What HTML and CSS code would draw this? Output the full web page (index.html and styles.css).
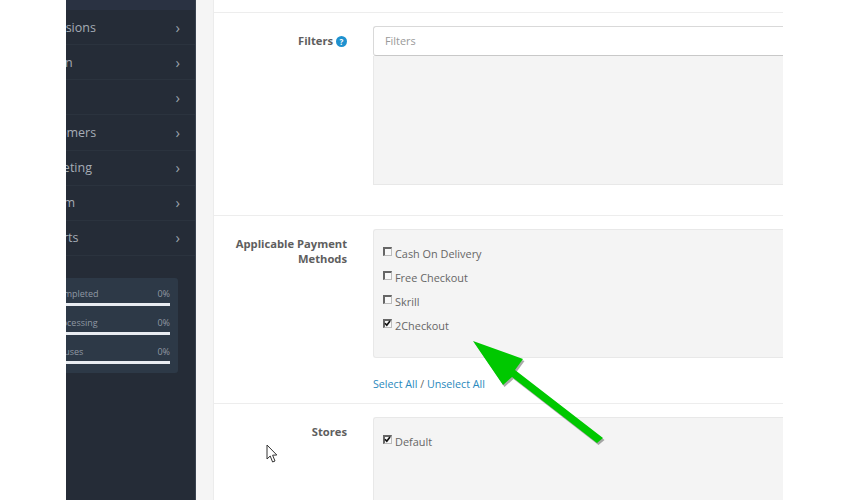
FILE: index.html
```html
<!DOCTYPE html>
<html lang="en">
<head>
<meta charset="utf-8">
<title>Payment Methods</title>
<link rel="stylesheet" href="styles.css">
</head>
<body>
<div class="page">
  <div class="gutter"></div>
  <nav class="sidebar">
    <div class="menu-top"></div>
    <ul class="menu">
      <li class="menu-item"><span class="menu-label">Extensions</span><span class="chev">›</span></li>
      <li class="menu-item"><span class="menu-label">Design</span><span class="chev">›</span></li>
      <li class="menu-item"><span class="menu-label">Sales</span><span class="chev">›</span></li>
      <li class="menu-item"><span class="menu-label">Customers</span><span class="chev">›</span></li>
      <li class="menu-item"><span class="menu-label">Marketing</span><span class="chev">›</span></li>
      <li class="menu-item"><span class="menu-label">System</span><span class="chev">›</span></li>
      <li class="menu-item"><span class="menu-label">Reports</span><span class="chev">›</span></li>
    </ul>
    <div class="stats">
      <div class="stat"><div class="stat-head"><span class="stat-label">Orders Completed</span><span>0%</span></div><div class="stat-bar"></div></div>
      <div class="stat"><div class="stat-head"><span class="stat-label">Orders Processing</span><span>0%</span></div><div class="stat-bar"></div></div>
      <div class="stat"><div class="stat-head"><span class="stat-label">Other Statuses</span><span>0%</span></div><div class="stat-bar"></div></div>
    </div>
  </nav>
  <div class="strip"></div>
  <main class="panel">
    <section class="row row-filters">
      <div class="label">Filters <span class="help">?</span></div>
      <div class="field">
        <div class="input">Filters</div>
        <div class="well well-filters"></div>
      </div>
    </section>
    <section class="row row-payment">
      <div class="label">Applicable Payment Methods</div>
      <div class="field">
        <div class="well well-payment">
          <div class="check-row"><span class="box"></span>Cash On Delivery</div>
          <div class="check-row"><span class="box"></span>Free Checkout</div>
          <div class="check-row"><span class="box"></span>Skrill</div>
          <div class="check-row"><span class="box"><svg viewBox="0 0 9 9" class="tick"><path d="M2 4.2 L3.8 6.2 L7 2" /></svg></span>2Checkout</div>
        </div>
        <div class="links"><a class="link">Select All</a> / <a class="link">Unselect All</a></div>
      </div>
    </section>
    <section class="row row-stores">
      <div class="label">Stores</div>
      <div class="field">
        <div class="well well-stores">
          <div class="check-row"><span class="box"><svg viewBox="0 0 9 9" class="tick"><path d="M2 4.2 L3.8 6.2 L7 2" /></svg></span>Default</div>
        </div>
      </div>
    </section>
  </main>
</div>
<svg class="arrow" viewBox="0 0 850 500" aria-hidden="true">
  <polygon class="arrow-shadow" points="473,341 523,359 515,370 603,438 597,443 512,377 503,385"/>
  <polygon class="arrow-fill" points="473,341 523,359 515,370 603,438 597,443 512,377 503,385"/>
</svg>
<svg class="cursor" viewBox="0 0 12 20" aria-hidden="true">
  <path d="M1 1 L1 15 L4.2 12 L6.6 18 L9 17 L6.6 11.2 L10.8 11 Z"/>
</svg>
</body>
</html>
```
FILE: styles.css
```css
* { box-sizing: border-box; }
html, body { margin: 0; height: 100%; background: #fff; overflow: hidden; }
body { font-family: "Open Sans", sans-serif; color: #666; font-size: 10.9px; position: relative; }
.page { display: flex; height: 500px; overflow: hidden; }
.gutter { width: 66px; flex: none; }
.sidebar { width: 130px; flex: none; background: #252c37; overflow: hidden; border-right: 1px solid #3a4350; }
.menu-top { height: 10px; background: #2a3242; }
.menu { list-style: none; margin: 0; padding: 0; }
.menu-item { height: 35.15px; display: flex; align-items: center; justify-content: space-between; border-bottom: 1px solid #2b333e; padding-right: 15px; color: #a6adb6; font-size: 12.5px; }
.menu-label { margin-left: -33px; white-space: nowrap; }
.chev { font-size: 15px; line-height: 1; color: #9aa1aa; }
.stats { width: 112px; margin-top: 22px; height: 95px; background: #2d3947; border-radius: 0 3px 3px 0; padding: 8px 8px 0 0; overflow: hidden; color: #8f98a3; font-size: 9px; }
.stat { height: 29px; }
.stat-head { display: flex; justify-content: space-between; height: 15px; line-height: 15px; }
.stat-label { margin-left: -45px; white-space: nowrap; }
.stat-bar { height: 3px; background: #e8ecf1; margin-top: 2px; }
.strip { width: 18px; flex: none; background: #f5f5f5; border-right: 1px solid #ececec; }
.panel { width: 569px; flex: none; overflow: hidden; }
.row { display: flex; border-bottom: 1px solid #ededed; padding-top: 13px; }
.row-filters { margin-top: 12px; border-top: 1px solid #ededed; height: 204px; }
.row-payment { height: 188px; }
.row-stores { border-bottom: 0; }
.label { width: 133px; flex: none; text-align: right; font-weight: 700; font-size: 11.2px; line-height: 15px; color: #5e5e5e; padding-top: 7px; }
.help { display: inline-block; width: 11px; height: 11px; line-height: 11px; border-radius: 50%; background: #1e91cf; color: #fff; font-size: 8px; text-align: center; vertical-align: 0; }
.field { margin-left: 26px; flex: 1; }
.input { height: 30px; border: 1px solid #d9d9d9; border-right: 0; border-bottom-color: #c8c8c8; border-radius: 3px 0 0 3px; background: #fff; line-height: 28px; padding-left: 11px; color: #999; }
.well { background: #f4f4f4; border: 1px solid #e8e8e8; border-right: 0; }
.well-filters { height: 129px; border-top: 0; }
.well-payment { height: 129px; padding-top: 11px; border-radius: 3px 0 0 3px; }
.well-stores { height: 90px; padding-top: 11px; border-radius: 3px 0 0 3px; }
.check-row { height: 24px; padding-left: 9px; display: flex; align-items: center; color: #666; }
.box { width: 9px; height: 9px; margin-right: 3px; margin-top: -3px; background: #f8f8f8; border: 1px solid #bbb; border-top: 2px solid #666; border-left: 2px solid #666; flex: none; display: block; }
.tick { display: block; width: 9px; height: 9px; margin: -2px 0 0 -2px; }
.tick path { fill: none; stroke: #111; stroke-width: 1.7; }
.links { margin-top: 18px; line-height: 16px; color: #666; font-size: 10.7px; }
.link { color: #2a89bd; }
.arrow { position: absolute; left: 0; top: 0; width: 850px; height: 500px; pointer-events: none; }
.arrow-fill { fill: #00c800; }
.arrow-shadow { fill: #555; opacity: .5; transform: translate(1.5px, 2px); }
.cursor { position: absolute; left: 266px; top: 444px; width: 12px; height: 20px; }
.cursor path { fill: #fff; stroke: #333; stroke-width: 1; }
```
